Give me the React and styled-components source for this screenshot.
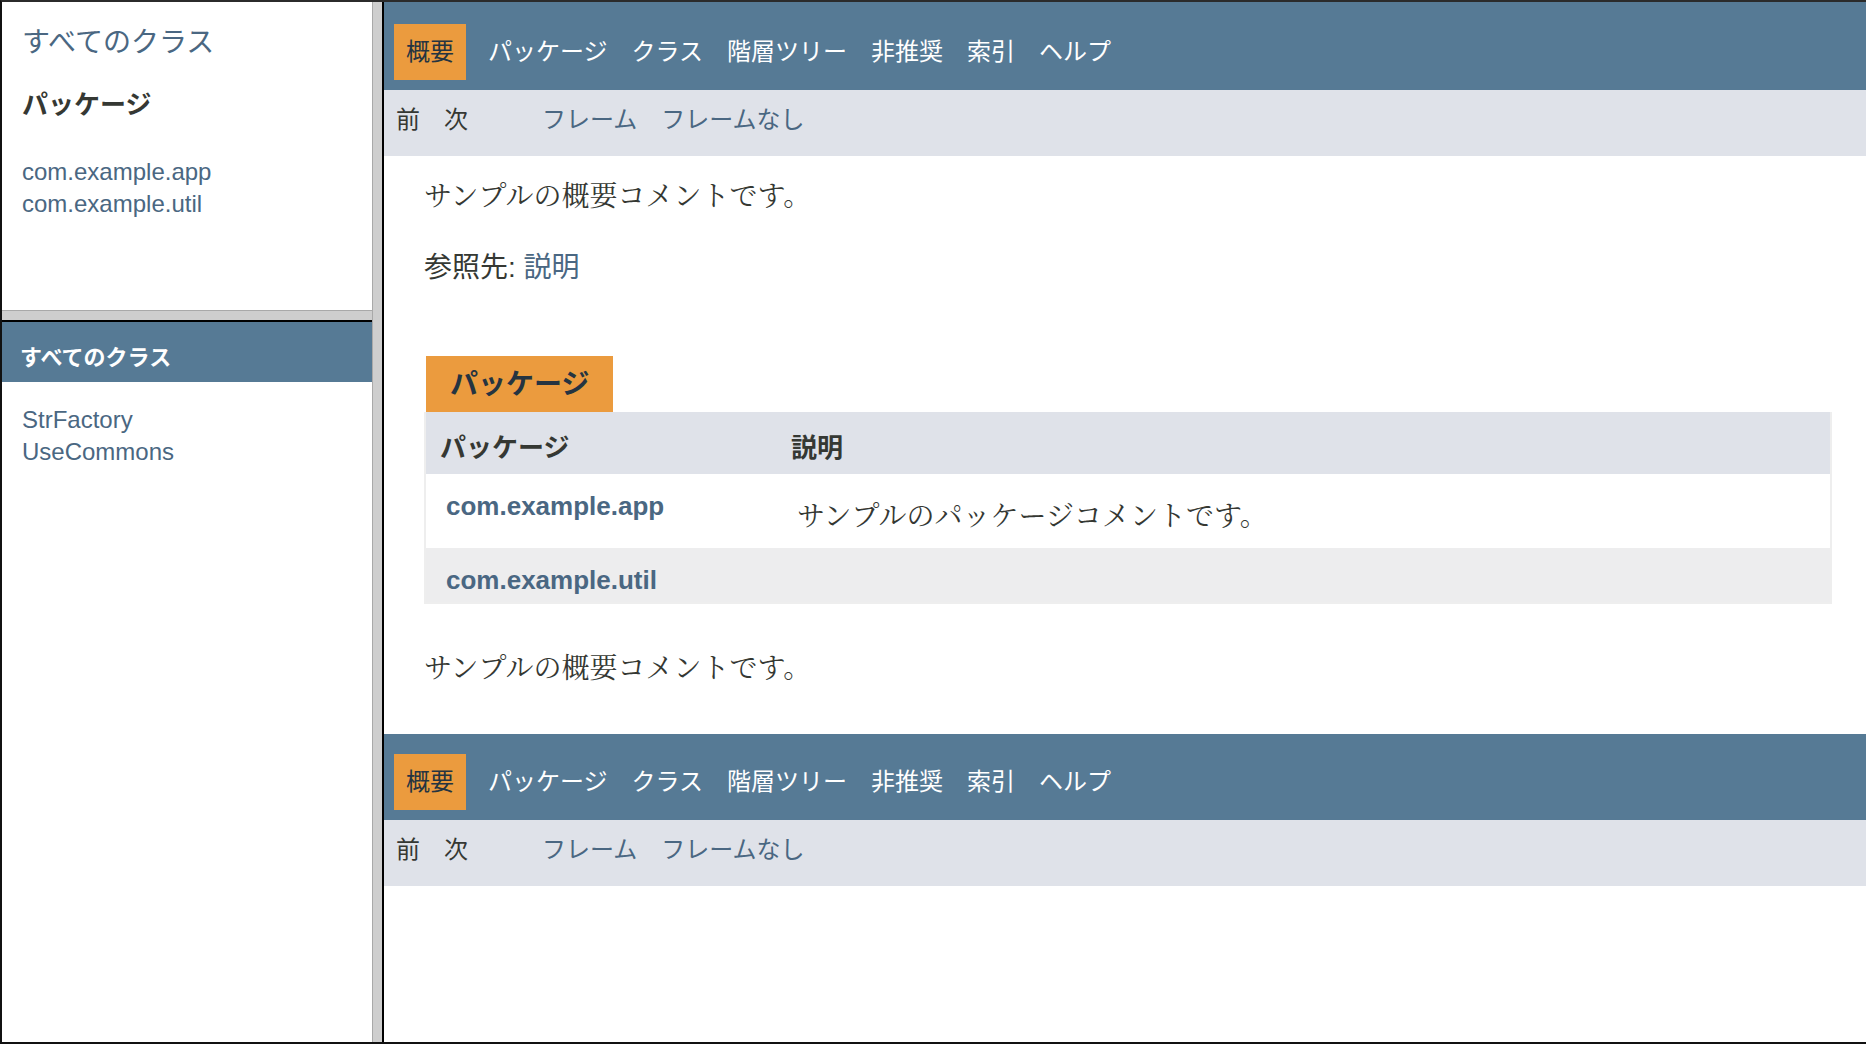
import React from "react";
import styled, { createGlobalStyle } from "styled-components";

const SANS = `"Liberation Sans", Arial, "Noto Sans CJK JP", sans-serif`;
const SERIF = `"Liberation Serif", "Noto Serif CJK JP", "Noto Sans CJK JP", serif`;

const C = {
  blue: "#567a95",
  orange: "#eb9b3e",
  sub: "#dfe2e9",
  row: "#ededee",
  text: "#353833",
  link: "#4a6782",
  tab: "#253441",
};

const Global = createGlobalStyle`
  html, body { margin: 0; padding: 0; background: #fff; overflow: hidden; }
  body { font-family: ${SANS}; color: ${C.text}; }
  * { box-sizing: border-box; }
`;

const Window = styled.div`
  display: flex;
  width: 1866px;
  height: 1044px;
  border-top: 2px solid #2b2b2b;
  border-left: 2px solid #111;
  border-bottom: 2px solid #111;
  background: #fff;
`;

const LeftColumn = styled.div`
  width: 370px;
  flex: none;
  display: flex;
  flex-direction: column;
`;

const PackagesFrame = styled.div`
  height: 308px;
  flex: none;
  overflow: hidden;
  background: #fff;
`;

const ClassesFrame = styled.div`
  flex: 1;
  overflow: hidden;
  background: #fff;
`;

const HDivider = styled.div`
  height: 12px;
  flex: none;
  background: #cecece;
  border-top: 1px solid #a9a9a9;
  border-bottom: 2px solid #000;
`;

const VDivider = styled.div`
  width: 12px;
  flex: none;
  background: #cecece;
  border-left: 1px solid #a9a9a9;
  border-right: 2px solid #000;
`;

const MainFrame = styled.div`
  flex: 1;
  min-width: 0;
  overflow: hidden;
  background: #fff;
`;

const Link = styled.a`
  color: ${C.link};
  text-decoration: none;
  cursor: pointer;
`;

/* ---- left frames ---- */
const IndexHeader = styled.div`
  margin: 21px 20px 0;
  font-size: 28px;
  line-height: 40px;
`;

const IndexHeading = styled.h2`
  margin: 23px 20px 0;
  padding-bottom: 6px;
  font-size: 26px;
  line-height: 38px;
  font-weight: bold;
  color: ${C.text};
`;

const IndexList = styled.ul`
  list-style: none;
  margin: ${(p) => p.$mt}px 20px 0;
  padding: 0;
`;

const IndexItem = styled.li`
  padding-top: 4px;
  font-size: 24px;
  line-height: 28px;
  white-space: nowrap;
`;

const Bar = styled.h1`
  margin: 0;
  padding: 19px 11px 7px 18px;
  background: ${C.blue};
  color: #fff;
  font-size: 22px;
  line-height: 34px;
  font-weight: bold;
`;

/* ---- navigation ---- */
const NavBar = styled.div`
  background: ${C.blue};
  height: ${(p) => p.$h}px;
  padding-top: ${(p) => p.$pt}px;
  margin-top: ${(p) => p.$mt || 0}px;
  display: flex;
  align-items: flex-start;
`;

const NavList = styled.ul`
  display: flex;
  list-style: none;
  margin: 0 ${(p) => p.$mr || 0}px 0 0;
  padding: 0;
`;

const NavItem = styled.li`
  padding: 10px 12px;
  margin: ${(p) => (p.$active ? "0 10px" : "0")};
  font-size: 24px;
  line-height: 36px;
  white-space: nowrap;
  color: ${(p) => (p.$active ? C.tab : "#fff")};
  background: ${(p) => (p.$active ? C.orange : "transparent")};
`;

const NavLink = styled.a`
  color: inherit;
  text-decoration: none;
  cursor: pointer;
`;

const SubNav = styled.div`
  background: ${C.sub};
  height: 66px;
  display: flex;
  align-items: flex-start;
`;

const SubItem = styled.li`
  padding: 12px 12px 8px;
  font-size: 24px;
  line-height: 36px;
  white-space: nowrap;
  color: ${C.text};
`;

/* ---- content ---- */
const Header = styled.div`
  margin: 0 40px;
  padding-top: 10px;
`;

const Block = styled.div`
  font-family: ${SERIF};
  font-size: 28px;
  line-height: 42px;
  color: ${C.text};
  margin: ${(p) => p.$mt}px 20px 4px 0;
`;

const SeeAlso = styled.p`
  margin: 30px 0 28px;
  font-size: 28px;
  line-height: 40px;
`;

const ContentContainer = styled.div`
  padding: 20px 34px 20px 40px;
`;

const CaptionRow = styled.div`
  display: flex;
  padding: 20px 0 0 2px;
`;

const CaptionTab = styled.span`
  display: block;
  height: 56px;
  padding: 13px 24px 11px;
  background: ${C.orange};
  color: ${C.tab};
  font-size: 28px;
  line-height: 32px;
  font-weight: bold;
  white-space: nowrap;
`;

const SummaryTable = styled.table`
  width: 100%;
  border-collapse: separate;
  border-spacing: 0;
  border-left: 2px solid #eee;
  border-right: 2px solid #eee;
  border-bottom: 2px solid #eee;
`;

const HeadCell = styled.th`
  background: ${C.sub};
  text-align: left;
  vertical-align: top;
  padding: 16px 6px 6px 14px;
  font-size: 26px;
  line-height: 40px;
  font-weight: bold;
  color: ${C.text};
  width: ${(p) => (p.$first ? "25%" : "auto")};
`;

const Row = styled.tr`
  background: ${(p) => (p.$alt ? C.row : "#fff")};
`;

const FirstCell = styled.td`
  vertical-align: top;
  padding: 16px 0 6px 20px;
  font-size: 26px;
  line-height: 32px;
  white-space: nowrap;
  width: 25%;
`;

const LastCell = styled.td`
  vertical-align: top;
  padding: 16px 0 6px 20px;
  font-size: 26px;
`;

const PkgLink = styled(Link)`
  font-weight: bold;
`;

const navItems = ["パッケージ", "クラス", "階層ツリー", "非推奨", "索引", "ヘルプ"];

function TopBar({ h, pt, mt }) {
  return (
    <>
      <NavBar $h={h} $pt={pt} $mt={mt}>
        <NavList>
          <NavItem $active>概要</NavItem>
          {navItems.map((t) => (
            <NavItem key={t}>
              <NavLink>{t}</NavLink>
            </NavItem>
          ))}
        </NavList>
      </NavBar>
      <SubNav>
        <NavList $mr={50}>
          <SubItem>前</SubItem>
          <SubItem>次</SubItem>
        </NavList>
        <NavList>
          <SubItem>
            <Link>フレーム</Link>
          </SubItem>
          <SubItem>
            <Link>フレームなし</Link>
          </SubItem>
        </NavList>
      </SubNav>
    </>
  );
}

const packages = [
  { name: "com.example.app", desc: "サンプルのパッケージコメントです。" },
  { name: "com.example.util", desc: "" },
];

export default function App() {
  return (
    <>
      <Global />
      <Window>
        <LeftColumn>
          <PackagesFrame>
            <IndexHeader>
              <Link>すべてのクラス</Link>
            </IndexHeader>
            <IndexHeading>パッケージ</IndexHeading>
            <IndexList $mt={24}>
              {packages.map((p) => (
                <IndexItem key={p.name}>
                  <Link>{p.name}</Link>
                </IndexItem>
              ))}
            </IndexList>
          </PackagesFrame>
          <HDivider />
          <ClassesFrame>
            <Bar>すべてのクラス</Bar>
            <IndexList $mt={20}>
              <IndexItem>
                <Link>StrFactory</Link>
              </IndexItem>
              <IndexItem>
                <Link>UseCommons</Link>
              </IndexItem>
            </IndexList>
          </ClassesFrame>
        </LeftColumn>
        <VDivider />
        <MainFrame>
          <TopBar h={88} pt={22} />
          <Header>
            <Block $mt={10}>サンプルの概要コメントです。</Block>
            <SeeAlso>
              参照先: <Link>説明</Link>
            </SeeAlso>
          </Header>
          <ContentContainer>
            <CaptionRow>
              <CaptionTab>パッケージ</CaptionTab>
            </CaptionRow>
            <SummaryTable>
              <thead>
                <tr>
                  <HeadCell $first>パッケージ</HeadCell>
                  <HeadCell>説明</HeadCell>
                </tr>
              </thead>
              <tbody>
                {packages.map((p, i) => (
                  <Row key={p.name} $alt={i % 2 === 1}>
                    <FirstCell>
                      <PkgLink>{p.name}</PkgLink>
                    </FirstCell>
                    <LastCell>{p.desc && <Block $mt={6}>{p.desc}</Block>}</LastCell>
                  </Row>
                ))}
              </tbody>
            </SummaryTable>
          </ContentContainer>
          <ContentContainer>
            <Block $mt={4}>サンプルの概要コメントです。</Block>
          </ContentContainer>
          <TopBar h={86} pt={20} mt={20} />
        </MainFrame>
      </Window>
    </>
  );
}
